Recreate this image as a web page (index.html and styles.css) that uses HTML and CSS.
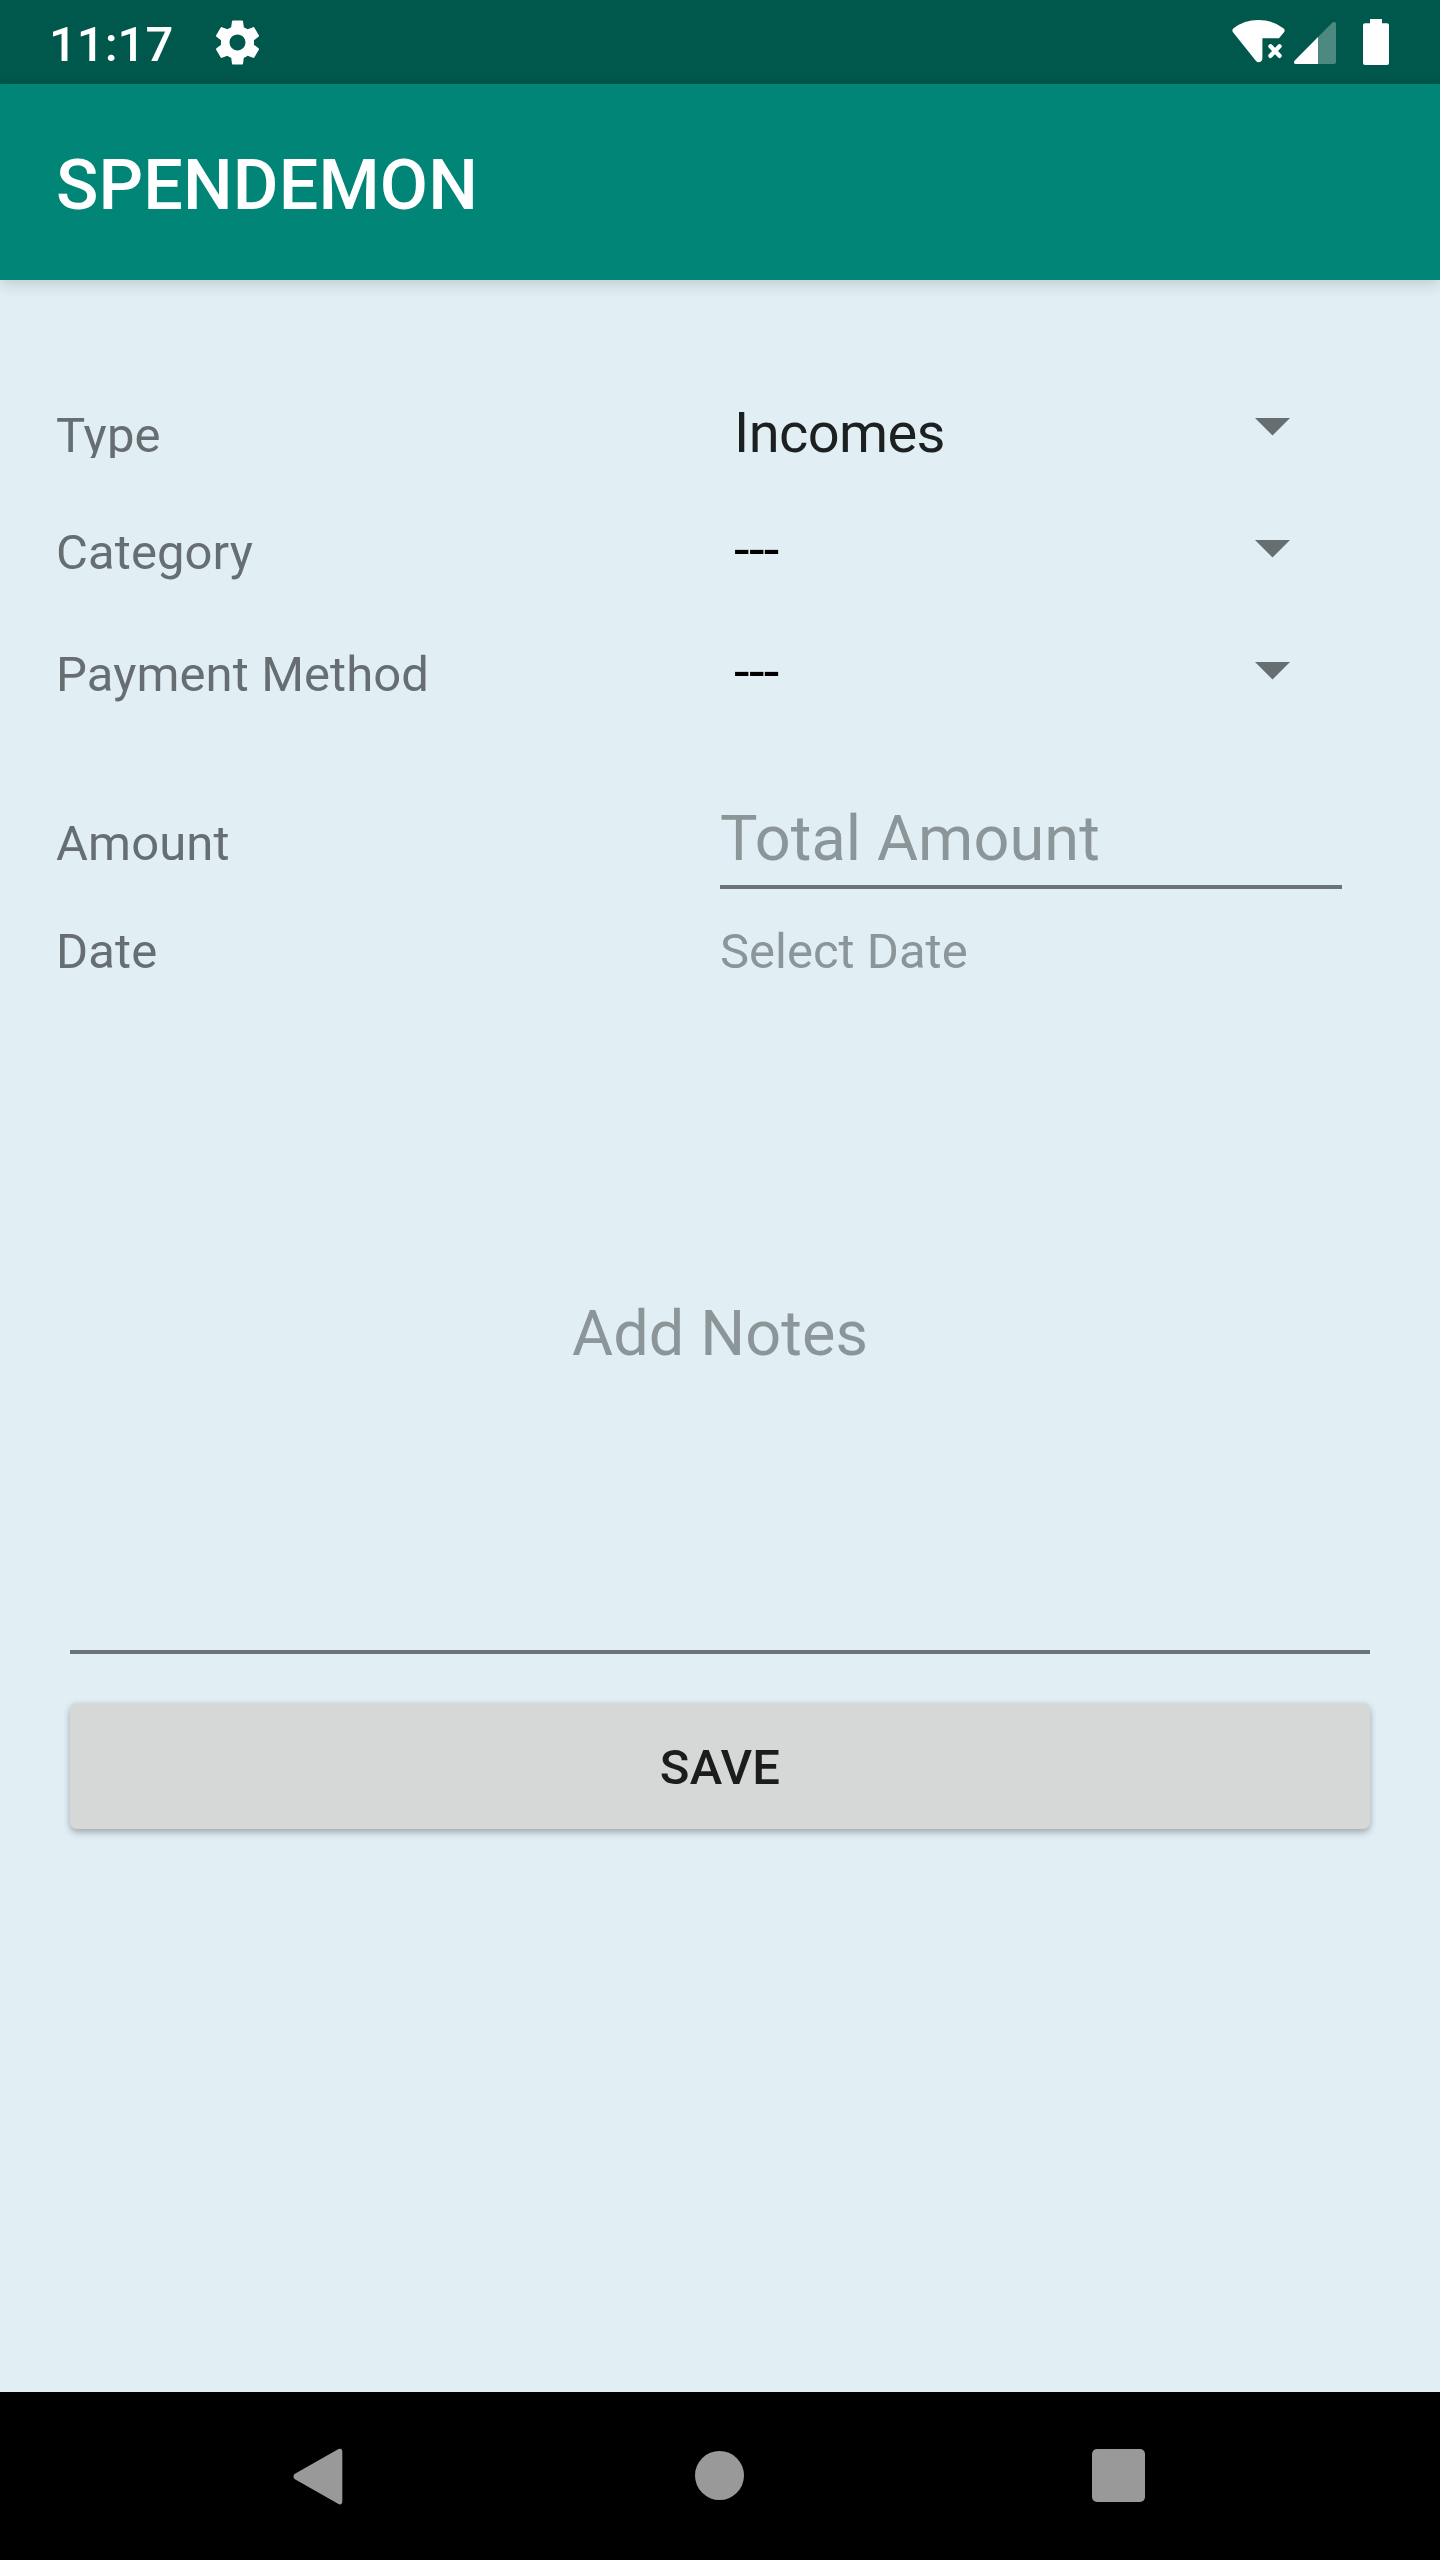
FILE: index.html
```html
<!DOCTYPE html>
<html lang="en">
<head>
<meta charset="utf-8">
<title>SPENDEMON</title>
<link rel="stylesheet" href="styles.css">
</head>
<body>
<div class="status-bar">
  <span class="clock">11:17</span>
  <svg class="gear" viewBox="0 0 24 24"><path d="M19.43 12.98c.04-.32.07-.64.07-.98s-.03-.66-.07-.98l2.11-1.65c.19-.15.24-.42.12-.64l-2-3.46c-.12-.22-.39-.3-.61-.22l-2.49 1c-.52-.4-1.08-.73-1.69-.98l-.38-2.65C14.46 2.18 14.25 2 14 2h-4c-.25 0-.46.18-.49.42l-.38 2.65c-.61.25-1.17.59-1.69.98l-2.49-1c-.23-.09-.49 0-.61.22l-2 3.46c-.13.22-.07.49.12.64l2.11 1.65c-.04.32-.07.65-.07.98s.03.66.07.98l-2.11 1.65c-.19.15-.24.42-.12.64l2 3.46c.12.22.39.3.61.22l2.49-1c.52.4 1.08.73 1.69.98l.38 2.65c.03.24.24.42.49.42h4c.25 0 .46-.18.49-.42l.38-2.65c.61-.25 1.17-.59 1.69-.98l2.49 1c.23.09.49 0 .61-.22l2-3.46c.12-.22.07-.49-.12-.64l-2.11-1.65zM12 15.6c-1.98 0-3.6-1.62-3.6-3.6s1.62-3.6 3.6-3.6 3.6 1.62 3.6 3.6-1.62 3.6-3.6 3.6z"/></svg>
  <svg class="indicators" viewBox="1230 0 162 84">
    <path d="M1232.8 32Q1231.6 30 1233.6 28.3Q1244 20 1258.5 20T1283.4 28.3Q1285.4 30 1284.2 32L1279 38.3H1262.4V58.5Q1262 62.3 1258.5 62.3Q1257 62.3 1255.8 60.8Z"/>
    <path class="cross" d="M1270.5 46.3L1279.5 55.8M1279.5 46.3L1270.5 55.8"/>
    <path d="M1318 37V64H1296Q1294 64 1294 62.5Q1294 61.3 1295 60.2Z"/>
    <path class="signal-off" d="M1318 37L1332 23Q1333.3 21.8 1334.8 22Q1336 22.2 1336 24V62Q1336 64 1334 64H1318Z"/>
    <path d="M1370 19H1382V23.3H1387Q1389 23.3 1389 25.3V63Q1389 65 1387 65H1365Q1363 65 1363 63V25.3Q1363 23.3 1365 23.3H1370Z"/>
  </svg>
</div>
<header class="app-bar"><h1 class="app-title">SPENDEMON</h1></header>
<main class="form">
  <div class="row spinner-row first">
    <span class="label clipped">Type</span>
    <span class="spinner">Incomes</span>
    <svg class="arrow" viewBox="0 0 35 17.5"><path d="M0 0H35L17.5 17.5Z"/></svg>
  </div>
  <div class="row spinner-row">
    <span class="label">Category</span>
    <span class="spinner empty">---</span>
    <svg class="arrow" viewBox="0 0 35 17.5"><path d="M0 0H35L17.5 17.5Z"/></svg>
  </div>
  <div class="row spinner-row">
    <span class="label">Payment Method</span>
    <span class="spinner empty">---</span>
    <svg class="arrow" viewBox="0 0 35 17.5"><path d="M0 0H35L17.5 17.5Z"/></svg>
  </div>
  <div class="row amount-row">
    <span class="label">Amount</span>
    <div class="amount hint">Total Amount</div>
  </div>
  <div class="row">
    <span class="label">Date</span>
    <span class="date">Select Date</span>
  </div>
  <div class="notes hint">Add Notes</div>
  <button class="save">SAVE</button>
</main>
<nav class="nav-bar">
  <svg class="nav-back" viewBox="0 0 50 57"><path d="M1.5 26Q-.5 28.5 1.5 31L45.5 56Q49.3 57.5 49.3 53V4Q49.3-.5 45.5 1Z"/></svg>
  <span class="nav-home"></span>
  <span class="nav-recent"></span>
</nav>
</body>
</html>
```

FILE: styles.css
```css
* {
  box-sizing: border-box;
}

body {
  margin: 0;
  width: 1440px;
  height: 2560px;
  display: flex;
  flex-direction: column;
  overflow: hidden;
  background: #e1eff5;
  font-family: Roboto, sans-serif;
  font-size: 49px;
  line-height: 57px;
}

.status-bar {
  flex: none;
  height: 84px;
  display: flex;
  align-items: flex-start;
  background: #00574b;
  color: #fff;
  fill: #fff;
}

.clock {
  width: 162px;
  margin: 16px 0 0 49px;
  font-weight: 500;
}

.gear {
  width: 53px;
  height: 53px;
  margin-top: 16px;
}

.indicators {
  width: 162px;
  height: 84px;
  margin: 0 48px 0 auto;
}

.cross {
  stroke: #fff;
  stroke-width: 4.4;
  stroke-linecap: round;
}

.signal-off {
  opacity: .3;
}

.app-bar {
  flex: none;
  height: 196px;
  padding: 60px 56px 0;
  background: #008577;
  box-shadow: 0 4px 14px rgba(0, 0, 0, .16);
}

.app-title {
  margin: 0;
  color: #fff;
  font-size: 70px;
  font-weight: 500;
  letter-spacing: .15px;
  line-height: 82px;
}

.form {
  flex: 1;
  display: flex;
  flex-direction: column;
  padding: 115px 70px 0;
}

.row {
  display: grid;
  grid-template-columns: 664px 534px 88px;
  align-items: start;
  margin-left: -14px;
}

.label {
  color: #676e71;
  letter-spacing: .1px;
}

.spinner-row {
  height: 122px;
}

.spinner-row .label {
  margin-top: 7px;
}

.spinner-row .clipped {
  height: 51px;
  margin-top: 12px;
  overflow: hidden;
}

.spinner {
  padding-left: 14px;
  color: #1d2021;
  font-size: 56px;
  letter-spacing: -.6px;
  line-height: 66px;
}

.first .spinner {
  margin-top: 5px;
}

.spinner.empty {
  color: #000;
}

.arrow {
  width: 35px;
  height: 17.5px;
  margin-top: 23px;
  margin-left: .5px;
  fill: #676e71;
}

.amount-row {
  height: 162px;
}

.amount-row .label {
  margin-top: 54px;
}

.hint {
  color: #8c9598;
  font-size: 63px;
  letter-spacing: .1px;
  line-height: 73px;
}

.amount {
  width: 622px;
  height: 87px;
  margin-top: 41px;
  border-bottom: 4px solid #6c7376;
}

.date {
  color: #8c9598;
}

.notes {
  height: 674px;
  padding-top: 317px;
  border-bottom: 4px solid #6c7376;
  text-align: center;
}

.save {
  height: 126px;
  margin-top: 49px;
  padding: 2px 0 0;
  border: 0;
  border-radius: 7px;
  background: #d6d8d7;
  box-shadow: 0 4px 7px rgba(0, 0, 0, .22), 0 1px 7px rgba(0, 0, 0, .1);
  color: #1c1c1c;
  font: 500 49px/57px Roboto, sans-serif;
  letter-spacing: .2px;
}

.nav-bar {
  flex: none;
  height: 168px;
  display: grid;
  grid-template-columns: 402px 397px 53px;
  align-items: start;
  padding: 56px 0 0 293px;
  background: #000;
}

.nav-back {
  width: 50px;
  height: 57px;
  fill: #999;
}

.nav-home {
  width: 49px;
  height: 49px;
  margin-top: 3px;
  border-radius: 50%;
  background: #999;
}

.nav-recent {
  width: 53px;
  height: 53px;
  margin-top: 1px;
  border-radius: 5px;
  background: #999;
}
```
